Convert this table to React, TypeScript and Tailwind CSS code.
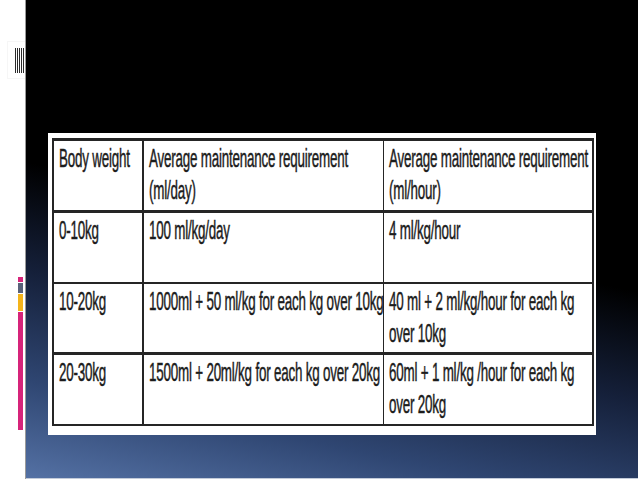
import React from "react";

type Row = {
  height: string;
  border: string;
  cells: string[][];
};

// heights include the bottom rule (border-box)
const ROWS: Row[] = [
  {
    height: "h-[72px]",
    border: "border-b-[3px]",
    cells: [
      ["Body weight"],
      ["Average maintenance requirement", "(ml/day)"],
      ["Average maintenance requirement", "(ml/hour)"],
    ],
  },
  {
    height: "h-[71px]",
    border: "border-b-2",
    cells: [["0-10kg"], ["100 ml/kg/day"], ["4 ml/kg/hour"]],
  },
  {
    height: "h-[71px]",
    border: "border-b-[3px]",
    cells: [
      ["10-20kg"],
      ["1000ml + 50 ml/kg for each kg over 10kg"],
      ["40 ml + 2 ml/kg/hour for each kg", "over 10kg"],
    ],
  },
  {
    height: "h-[71px]",
    border: "border-b-2",
    cells: [
      ["20-30kg"],
      ["1500ml + 20ml/kg for each kg over 20kg"],
      ["60ml + 1 ml/kg /hour for each kg", "over 20kg"],
    ],
  },
];

// the table is a stretched picture in the slide, so the text is tall and narrow
function CellText({ lines }: { lines: string[] }) {
  return (
    <div className="origin-top-left scale-y-[1.95] font-['Liberation_Sans',Arial,sans-serif] text-[13.4px] leading-[15.5px] tracking-[-0.2px] text-[#1c1c1c] [-webkit-text-stroke:0.25px_#1c1c1c]">
      {lines.map((line) => (
        <div key={line} className="whitespace-nowrap">
          {line}
        </div>
      ))}
    </div>
  );
}

function Ornament() {
  return (
    <svg width="20" height="40" viewBox="0 0 20 40" className="ml-[6px]">
      <rect x="1.5" y="1.5" width="18" height="37" fill="none" stroke="#ececec" strokeDasharray="1 1" />
      {[9, 11, 13, 15, 17].map((x) => (
        <line key={x} x1={x + 0.5} y1="8" x2={x + 0.5} y2="33" stroke="#2a2a2a" strokeWidth="1" />
      ))}
    </svg>
  );
}

export default function App() {
  return (
    <div className="flex h-[479px] w-[638px] overflow-hidden bg-white">
      {/* left strip with the slide ornaments */}
      <div className="flex w-[25px] shrink-0 flex-col bg-white pt-[40px]">
        <Ornament />
        <div className="ml-[18px] mt-[197px] flex w-[5px] flex-col gap-px">
          <div className="h-[5px] bg-[#d6247a]" />
          <div className="h-[10px] bg-[#59627a]" />
          <div className="h-[17px] bg-[#f4b41a]" />
          <div className="h-[118px] bg-[#d6247a]" />
        </div>
      </div>
      <div className="w-px shrink-0 bg-[#9a9a9a]" />

      <div className="flex flex-1 flex-col">
        <div className="flex-1 bg-[linear-gradient(192deg,#000_0%,#000_48%,#15203a_66%,#2f4672_84%,#5471a4_100%)] pl-[22px] pt-[133px]">
          <div className="h-[302px] w-[548px] overflow-hidden bg-white pl-[4px] pt-[5px]">
            <div className="w-[542px] border-x-2 border-t-[3px] border-[#252525]">
              {ROWS.map((row, i) => (
                <div key={i} className={`flex ${row.height} ${row.border} border-[#252525]`}>
                  <div className="w-[90px] shrink-0 border-r-2 border-[#252525] pl-[5px] pt-[3px]">
                    <CellText lines={row.cells[0]} />
                  </div>
                  <div className="w-[240px] shrink-0 border-r border-[#252525] pl-[5px] pt-[3px]">
                    <CellText lines={row.cells[1]} />
                  </div>
                  <div className="flex-1 pl-[5px] pt-[3px]">
                    <CellText lines={row.cells[2]} />
                  </div>
                </div>
              ))}
            </div>
          </div>
        </div>
        <div className="h-px bg-[#c3cbd9]" />
      </div>
    </div>
  );
}
